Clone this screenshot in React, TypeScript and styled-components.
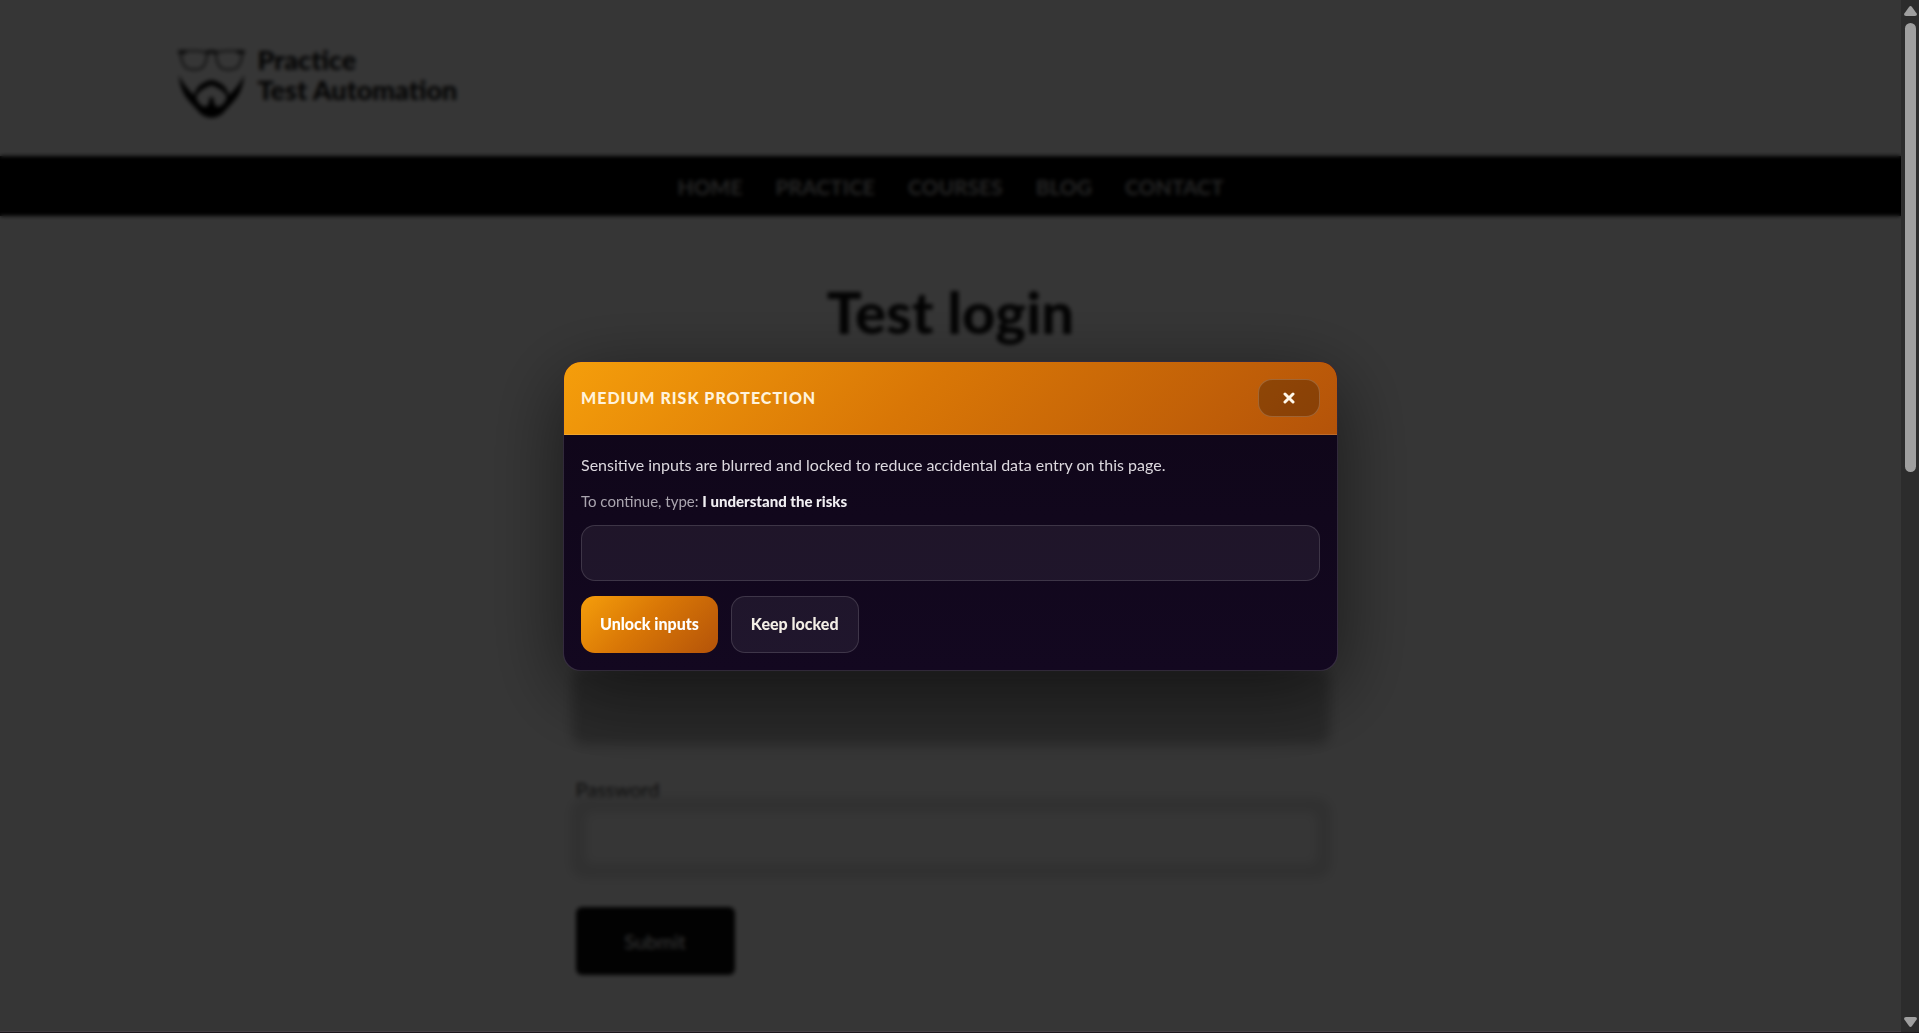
import React, { useState } from "react";
import styled, { createGlobalStyle } from "styled-components";

const GlobalStyle = createGlobalStyle`
  *, *::before, *::after { box-sizing: border-box; }
  body {
    margin: 0;
    background: #1b171b;
    font-family: Lato, "Liberation Sans", sans-serif;
  }
  h1, h2, p { margin: 0; }
  button, input { font-family: inherit; }
`;

const Shell = styled.div`
  display: grid;
  grid-template-columns: 1fr 18px;
  height: 100vh;
  padding-bottom: 1px;
  overflow: hidden;
`;

const Viewport = styled.div`
  position: relative;
  overflow: hidden;
  background: #fff;
  border-bottom: 1px solid #453f45;
`;

const Header = styled.header`
  display: flex;
  max-width: 1546px;
  height: 156px;
  margin: 0 auto;
  padding-top: 45px;
`;

const Brand = styled.a`
  display: flex;
  align-items: flex-start;
  gap: 13px;
  color: #111;
  font-size: 27px;
  font-weight: 900;
  line-height: 30px;
  text-decoration: none;
`;

const Logo = styled.svg`
  width: 67px;
  height: 73px;
  padding-top: 3px;
`;

const Nav = styled.nav`
  display: flex;
  justify-content: center;
  align-items: center;
  gap: 33px;
  height: 60px;
  background: #000;
`;

const NavLink = styled.a`
  color: #b4b4b4;
  font-size: 21px;
  font-weight: 700;
  text-decoration: none;
`;

const Main = styled.main`
  max-width: 750px;
  margin: 0 auto;
  padding-top: 60px;
`;

const PageTitle = styled.h1`
  color: #111;
  font-size: 58px;
  font-weight: 900;
  line-height: 72px;
  text-align: center;
`;

const LoginForm = styled.form`
  display: flex;
  flex-direction: column;
  align-items: flex-start;
  padding-top: 295px;
`;

const FieldLabel = styled.label`
  color: #333;
  font-size: 20px;
  line-height: 28px;
`;

const LockedInput = styled.input<{ $filled?: boolean }>`
  width: 100%;
  height: 70px;
  border: ${(p) => (p.$filled ? "0" : "8px solid #dcdcdc")};
  border-radius: 8px;
  background: ${(p) => (p.$filled ? "#c0c0c0" : "#fff")};
  box-shadow: 0 0 0 4px ${(p) => (p.$filled ? "#c0c0c0" : "#dcdcdc")};
  filter: blur(6px);
`;

const Field = styled.div`
  display: flex;
  flex-direction: column;
  width: 100%;
  padding-bottom: 34px;
`;

const SubmitButton = styled.button`
  width: 159px;
  height: 68px;
  border: 0;
  border-radius: 6px;
  background: #0a0a0a;
  color: #fff;
  font-size: 20px;
`;

const Overlay = styled.div`
  position: absolute;
  inset: 0;
  display: flex;
  align-items: center;
  justify-content: center;
  background: rgba(0, 0, 0, 0.79);
  backdrop-filter: blur(2px);
`;

const Dialog = styled.section`
  width: 775px;
  overflow: hidden;
  border: 1px solid rgba(255, 255, 255, 0.14);
  border-radius: 18px;
  background: linear-gradient(#0f0618, #130820);
  box-shadow: 0 20px 80px rgba(0, 0, 0, 0.55);
`;

const DialogHeader = styled.header`
  display: flex;
  align-items: center;
  justify-content: space-between;
  padding: 17px;
  border-bottom: 1px solid rgba(255, 255, 255, 0.14);
  background: linear-gradient(135deg, #f59e0b, #d97706 45%, #b45309) border-box;
`;

const DialogTitle = styled.h2`
  color: #fff3dc;
  font-size: 16px;
  font-weight: 900;
  letter-spacing: 1px;
  text-transform: uppercase;
`;

const CloseButton = styled.button`
  display: flex;
  align-items: center;
  justify-content: center;
  width: 62px;
  height: 38px;
  border: 1px solid rgba(255, 255, 255, 0.18);
  border-radius: 14px;
  background: rgba(0, 0, 0, 0.25);
`;

const DialogBody = styled.div`
  display: flex;
  flex-direction: column;
  padding: 17px;
`;

const Message = styled.p`
  color: #dcd8de;
  font-size: 16px;
  line-height: 26px;
`;

const Prompt = styled.label`
  padding: 10px 0 11px;
  color: #aaa5af;
  font-size: 15px;
  line-height: 26px;

  strong {
    color: #f0eef2;
    font-weight: 900;
  }
`;

const ConfirmInput = styled.input`
  width: 100%;
  height: 56px;
  padding: 0 16px;
  border: 1px solid rgba(255, 255, 255, 0.14);
  border-radius: 14px;
  outline: 0;
  background: rgba(255, 255, 255, 0.06);
  color: #fff;
  font-size: 16px;
`;

const Actions = styled.div`
  display: flex;
  gap: 13px;
  padding-top: 15px;
`;

const ActionButton = styled.button<{ $primary?: boolean }>`
  height: 57px;
  padding: 0 19px 2px;
  border: ${(p) => (p.$primary ? "0" : "1px solid rgba(255, 255, 255, 0.14)")};
  border-radius: 14px;
  background: ${(p) =>
    p.$primary
      ? "linear-gradient(135deg, #f59e0b, #d97706 45%, #b45309)"
      : "rgba(255, 255, 255, 0.06)"};
  color: ${(p) => (p.$primary ? "#fff" : "#f3eee6")};
  font-size: 16px;
  font-weight: 900;
`;

const ScrollTrack = styled.div`
  display: flex;
  flex-direction: column;
  align-items: center;
  gap: 7px;
  padding: 6px 0 5px;
  background: #2c2c2c;
`;

const ScrollThumb = styled.div`
  width: 11px;
  height: 44%;
  border-radius: 6px;
  background: #9f9f9f;
`;

const ScrollArrow = styled.svg<{ $end?: boolean }>`
  width: 13px;
  height: 10px;
  flex: none;
  margin-top: ${(p) => (p.$end ? "auto" : "0")};
  fill: #9f9f9f;
`;

const links = ["Home", "Practice", "Courses", "Blog", "Contact"];

export default function App() {
  const [phrase, setPhrase] = useState("");

  return (
    <>
      <GlobalStyle />
      <Shell>
        <Viewport>
          <Header>
            <Brand href="#">
              <Logo viewBox="0 0 200 210" aria-hidden="true">
                <g fill="none" stroke="#222" strokeWidth="5">
                  <path d="M5 12 Q45 4 86 13 Q88 42 72 60 Q48 70 24 60 Q10 46 8 18" />
                  <path d="M195 12 Q155 4 114 13 Q112 42 128 60 Q152 70 176 60 Q190 46 192 18" />
                  <path d="M0 12 H24 M84 14 Q100 8 116 14 M176 12 H200" strokeWidth="10" />
                </g>
                <path
                  d="M2 80 Q16 112 48 142 Q54 112 82 101 Q100 91 118 101 Q146 112 152 142 Q184 112 198 80 Q194 130 168 158 Q148 180 132 198 Q118 209 100 209 Q82 209 68 198 Q52 180 32 158 Q6 130 2 80 Z M54 146 Q60 172 82 176 Q93 174 94 150 Q100 144 106 150 Q107 174 118 176 Q140 172 146 146 Q136 124 100 112 Q64 124 54 146 Z"
                  fillRule="evenodd"
                />
              </Logo>
              <span>
                Practice
                <br />
                Test Automation
              </span>
            </Brand>
          </Header>
          <Nav>
            {links.map((name) => (
              <NavLink key={name} href="#">
                {name.toUpperCase()}
              </NavLink>
            ))}
          </Nav>
          <Main>
            <PageTitle>Test login</PageTitle>
            <LoginForm>
              <Field>
                <FieldLabel htmlFor="username">Username</FieldLabel>
                <LockedInput id="username" $filled readOnly />
              </Field>
              <Field>
                <FieldLabel htmlFor="password">Password</FieldLabel>
                <LockedInput id="password" type="password" readOnly />
              </Field>
              <SubmitButton type="button">Submit</SubmitButton>
            </LoginForm>
          </Main>
          <Overlay>
            <Dialog role="dialog" aria-labelledby="dialog-title">
              <DialogHeader>
                <DialogTitle id="dialog-title">Medium risk protection</DialogTitle>
                <CloseButton type="button" aria-label="Close">
                  <svg width="12" height="12" viewBox="0 0 12 12" aria-hidden="true">
                    <path d="M2 2 L10 10 M10 2 L2 10" stroke="#fff8ea" strokeWidth="3" strokeLinecap="round" />
                  </svg>
                </CloseButton>
              </DialogHeader>
              <DialogBody>
                <Message>
                  Sensitive inputs are blurred and locked to reduce accidental data entry on this page.
                </Message>
                <Prompt htmlFor="confirm">
                  To continue, type: <strong>I understand the risks</strong>
                </Prompt>
                <ConfirmInput
                  id="confirm"
                  value={phrase}
                  onChange={(event) => setPhrase(event.target.value)}
                />
                <Actions>
                  <ActionButton type="button" $primary>
                    Unlock inputs
                  </ActionButton>
                  <ActionButton type="button">Keep locked</ActionButton>
                </Actions>
              </DialogBody>
            </Dialog>
          </Overlay>
        </Viewport>
        <ScrollTrack aria-hidden="true">
          <ScrollArrow viewBox="0 0 13 10">
            <path d="M5 1 Q6.500 -1 8 1 L13 8 Q13 10 11 10 H2 Q0 10 0 8 Z" />
          </ScrollArrow>
          <ScrollThumb />
          <ScrollArrow viewBox="0 0 13 10" $end>
            <path d="M5 9 Q6.500 11 8 9 L13 2 Q13 0 11 0 H2 Q0 0 0 2 Z" />
          </ScrollArrow>
        </ScrollTrack>
      </Shell>
    </>
  );
}
